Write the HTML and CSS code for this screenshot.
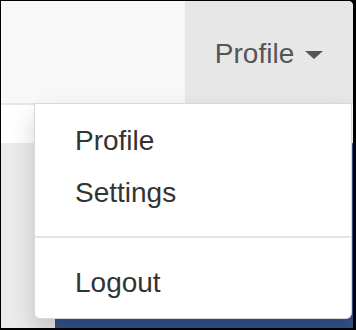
FILE: index.html
```html
<!DOCTYPE html>
<html lang="en">
<head>
    <meta charset="UTF-8">
    <meta name="viewport" content="width=device-width, initial-scale=1.0">
    <title>Profile menu</title>
    <link rel="stylesheet" href="styles.css">
</head>
<body>
    <div class="window">
        <nav class="navbar">
            <div class="nav-item open">
                <a href="#" class="nav-link">Profile <span class="caret"></span></a>
                <ul class="dropdown-menu">
                    <li><a href="#">Profile</a></li>
                    <li><a href="#">Settings</a></li>
                    <li class="divider"></li>
                    <li><a href="#">Logout</a></li>
                </ul>
            </div>
        </nav>

        <main class="page">
            <div class="side"></div>
            <div class="panel"></div>
        </main>
    </div>
</body>
</html>
```

FILE: styles.css
```css
* {
    margin: 0;
    padding: 0;
    box-sizing: border-box;
    font-family: "Liberation Sans", Arial, sans-serif;
}

body {
    background: #000;
    width: 356px;
    height: 330px;
    overflow: hidden;
}

.window {
    margin: 1px 3px 2px 1px;
    height: 327px;
    background: #fff;
    border-top-right-radius: 5px;
    overflow: hidden;
    display: flex;
    flex-direction: column;
}

/* Navbar */
.navbar {
    display: flex;
    justify-content: flex-end;
    background: #f8f8f8;
    border-bottom: 2px solid #e7e7e7;
    margin-bottom: 38px;
    position: relative;
    z-index: 2;
}

.nav-item {
    position: relative;
}

.nav-link {
    display: block;
    padding: 33px 30px 29px;
    line-height: 40px;
    font-size: 28px;
    color: #555;
    text-decoration: none;
    background: #e7e7e7;
}

.caret {
    display: inline-block;
    width: 0;
    height: 0;
    margin-left: 3px;
    vertical-align: middle;
    border-top: 8px solid #555;
    border-left: 9px solid transparent;
    border-right: 9px solid transparent;
    position: relative;
    top: -1px;
}

/* Dropdown */
.dropdown-menu {
    position: absolute;
    top: 100%;
    right: 1px;
    width: 318px;
    list-style: none;
    padding: 10px 0;
    background: #fff;
    border: 1px solid rgba(0, 0, 0, 0.15);
    border-radius: 0 0 6px 6px;
    box-shadow: 0 12px 24px rgba(0, 0, 0, 0.175);
}

.dropdown-menu a {
    display: block;
    padding: 7px 40px 5px;
    line-height: 40px;
    font-size: 28px;
    color: #333;
    text-decoration: none;
}

.dropdown-menu .divider {
    height: 2px;
    margin: 18px 0;
    background: #e5e5e5;
}

/* Page below */
.page {
    flex: 1;
    display: flex;
}

.side {
    width: 54px;
    background: #ebebeb;
}

.panel {
    flex: 1;
    background: #34528c;
}
```
